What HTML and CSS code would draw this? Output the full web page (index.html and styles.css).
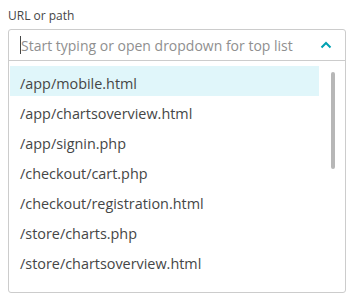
FILE: index.html
```html
<!DOCTYPE html>
<html lang="en">
<head>
  <meta charset="UTF-8" />
  <meta name="viewport" content="width=device-width, initial-scale=1.0"/>
  <title>URL or path</title>
  <link rel="stylesheet" href="styles.css">
</head>
<body>
  <div class="field">
    <label class="field-label">URL or path</label>

    <div class="combo">
      <div class="combo-input">
        <span class="caret"></span>
        <span class="placeholder">Start typing or open dropdown for top list</span>
        <svg class="chevron" width="12" height="8" viewBox="0 0 12 8">
          <path d="M1.5 6.5 L6 2 L10.5 6.5" fill="none" stroke="#00a1b2" stroke-width="2"/>
        </svg>
      </div>

      <div class="combo-list">
        <div class="option selected">/app/mobile.html</div>
        <div class="option">/app/chartsoverview.html</div>
        <div class="option">/app/signin.php</div>
        <div class="option">/checkout/cart.php</div>
        <div class="option">/checkout/registration.html</div>
        <div class="option">/store/charts.php</div>
        <div class="option">/store/chartsoverview.html</div>
        <div class="scroll-thumb"></div>
      </div>
    </div>
  </div>
</body>
</html>
```

FILE: styles.css
```css
body {
  font-family: "Open Sans", Arial, sans-serif;
  margin: 0;
  padding: 8px;
  background: #ffffff;
  color: #454646;
}

.field-label {
  display: block;
  font-size: 12px;
  line-height: 16px;
  margin-bottom: 5px;
  color: #454646;
}

.combo {
  width: 338px;
  box-sizing: border-box;
  border: 1px solid #cccccc;
  border-radius: 3px;
  overflow: hidden;
}

.combo-input {
  display: flex;
  align-items: center;
  height: 30px;
  padding: 0 13px 0 11px;
  border-bottom: 1px solid #cccccc;
  font-size: 14px;
}

.caret {
  display: inline-block;
  width: 1px;
  height: 18px;
  background: #454646;
  margin-right: -1px;
}

.placeholder {
  flex: 1;
  color: #8f8f8f;
  white-space: nowrap;
  padding-left: 1px;
}

.chevron {
  display: block;
}

.combo-list {
  position: relative;
  height: 226px;
  padding: 5px 26px 0 1px;
  overflow: hidden;
}

.option {
  height: 30px;
  box-sizing: border-box;
  padding: 5px 0 0 10px;
  line-height: 25px;
  font-size: 14.4px;
  white-space: nowrap;
}

.option.selected {
  background: #e0f6fa;
}

.scroll-thumb {
  position: absolute;
  top: 11px;
  right: 10px;
  width: 4px;
  height: 97px;
  border-radius: 2px;
  background: #b7b7b7;
}
```
